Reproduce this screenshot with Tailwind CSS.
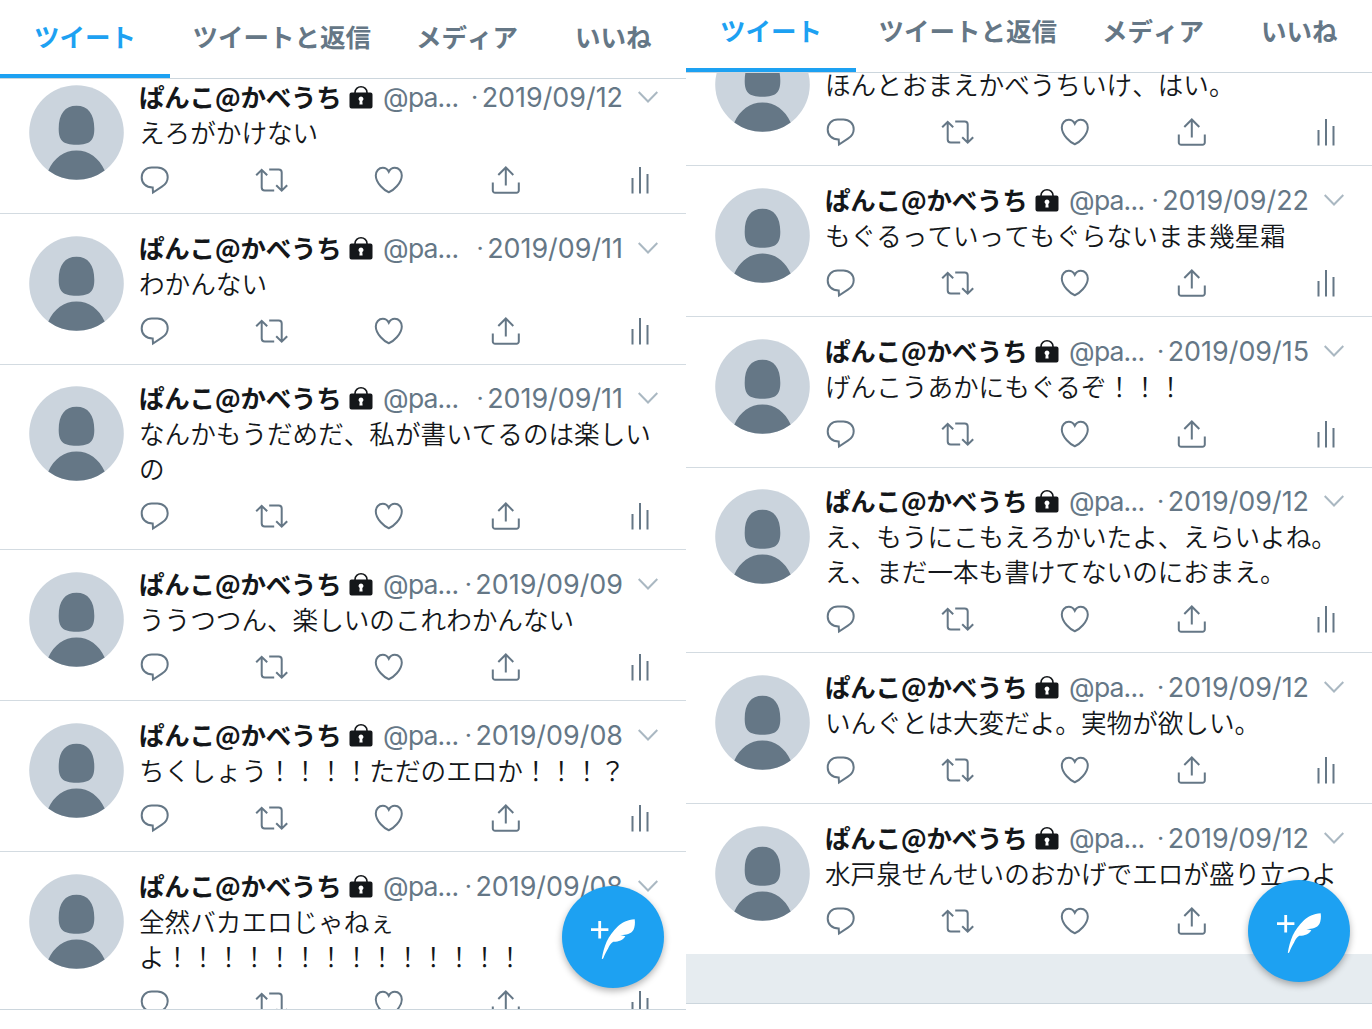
<!doctype html>
<html lang="ja">
  <head>
    <meta charset="utf-8" />
    <title>ツイート</title>
    <meta name="viewport" content="width=device-width, initial-scale=1" />
    <script src="https://cdn.jsdelivr.net/npm/@tailwindcss/browser@4"></script>
  </head>
  <body class="bg-white font-['Noto_Sans_CJK_JP',sans-serif] text-[#14171a] [font-kerning:none]">
    <!-- Icons -->
    <svg class="hidden">
      <symbol id="avatar" viewBox="0 0 95 95">
        <circle cx="47.500" cy="47.500" r="47.300" fill="#cbd4dd" />
        <path d="M47.500 20.700c11.500 0 17.800 8 17.800 23 0 11.500-3.800 16-17.800 16s-17.800-4.500-17.800-16c0-15 6.300-23 17.800-23z" fill="#657786" />
        <path d="M19.300 85.500C25 73 35 65.500 47.500 65.500S70 73 75.700 85.500a47.300 47.300 0 0 1-56.400 0z" fill="#657786" />
      </symbol>
      <symbol id="lock" viewBox="0 0 24 24">
        <path d="M6 9V7.500a6 5.800 0 0 1 12 0V9" fill="none" stroke="#14171a" stroke-width="1.600" />
        <path fill-rule="evenodd" d="M2.500 7.500h19a2 2 0 0 1 2 2v12a2 2 0 0 1-2 2h-19a2 2 0 0 1-2-2v-12a2 2 0 0 1 2-2zM12 11.500a2.500 2.500 0 0 0-1.300 4.600l-.3 3.400h3.200l-.3-3.400a2.500 2.500 0 0 0-1.300-4.600z" fill="#14171a" />
      </symbol>
      <symbol id="reply" viewBox="0 0 34 30">
        <path d="M14.700 22.500C7.700 22.500 3.700 18 3.700 12.500 3.700 6.500 8 2.500 13.700 2.500h5.700c6 0 10.300 4.200 10.300 9.700 0 4.200-2.300 7.300-5.800 9.500l-8.900 5.800z" />
      </symbol>
      <symbol id="retweet" viewBox="0 0 34 30">
        <path d="M1.200 10.300 6.700 4.800l5.500 5.500M6.700 5v17.500a3 3 0 0 0 3 3h9.500M32.200 20.200l-5.500 5.500-5.500-5.500M26.700 25V7.500a3 3 0 0 0-3-3h-9.500" />
      </symbol>
      <symbol id="like" viewBox="0 0 34 30">
        <path d="M16.800 27.300c-4-1.500-13-9-13-16.800C3.800 6 6.800 2.800 10.800 2.800c2.700 0 4.800 1.500 6 4 1.200-2.500 3.300-4 6-4 4 0 7 3.200 7 7.700 0 7.800-9 15.300-13 16.800z" />
      </symbol>
      <symbol id="share" viewBox="0 0 34 30">
        <path d="M16.800 20.500V3M9.300 10l7.500-7.500 7.500 7.500M3.800 17.500v8a2.300 2.300 0 0 0 2.300 2.300h21.400a2.300 2.300 0 0 0 2.300-2.300v-8" />
      </symbol>
      <symbol id="stats" viewBox="0 0 34 30">
        <path d="M9.500 13V28.500M17 2V28.500M24.500 9V28.500" />
      </symbol>
      <symbol id="compose" viewBox="0 0 102 102">
        <path d="M37.700 35v17.400M29 43.700h17.400" stroke="#fff" stroke-width="2.800" />
        <path d="M72.700 33.200C65.500 33.500 60 36.500 55.700 40.500 51 45 47.300 50 44.700 55.500 42.300 61 40.700 67 39.800 72.700c.4.600 1 .3 1.500-.4 1.700-4.200 3.200-7 4.900-10 1.200-2.800 2.600-5.100 5.100-6.600 4.500.2 9.800-1.300 12.100-5.500l-5-1.100c5 .1 10.700-.9 13-5 1.400-3 1.900-6.900 1.300-10.900z" fill="#fff" />
      </symbol>
    </svg>

    <template id="tweet">
      <article class="flex h-[150.8px] shrink-0 border-b border-[#d3dbe1] bg-white pl-[29px] pt-[21.800px]">
        <svg class="mr-[15px] size-[95px] shrink-0"><use href="#avatar" /></svg>
        <div class="w-[520px]">
          <header class="flex h-6 items-center whitespace-nowrap">
            <b class="-mt-[2px] w-[210px] text-[25.500px] leading-6 tracking-[-0.2px]">ぱんこ@かべうち</b>
            <svg class="mr-[10px] size-6 shrink-0"><use href="#lock" /></svg>
            <span class="font-['Inter',sans-serif] text-[26.500px] leading-6 tracking-[-0.7px] text-[#657786]">@pa...</span>
            <span class="ml-auto mr-[3.500px] font-['Inter',sans-serif] text-[25px] leading-6 text-[#657786]">·</span>
            <span class="date font-['Inter',sans-serif] text-[26.900px] leading-6 text-[#657786]"></span>
            <svg class="ml-[15px] mr-px h-3 w-5 shrink-0 fill-none stroke-[#aab8c2] stroke-2" viewBox="0 0 20 12"><path d="M.7 1 10 10.500 19.300 1" /></svg>
          </header>
          <p class="text mt-[5px] whitespace-pre text-[25.600px] font-[350] leading-[35px]"></p>
          <div class="-ml-px mt-[16px] flex fill-none stroke-[#657786] stroke-2">
            <svg class="mr-[83px] h-[30px] w-[34px]"><use href="#reply" /></svg>
            <svg class="mr-[83px] h-[30px] w-[34px]"><use href="#retweet" /></svg>
            <svg class="mr-[83px] h-[30px] w-[34px]"><use href="#like" /></svg>
            <svg class="mr-[100px] h-[30px] w-[34px]"><use href="#share" /></svg>
            <svg class="h-[30px] w-[34px]"><use href="#stats" /></svg>
          </div>
        </div>
      </article>
    </template>

    <div class="flex h-[1029px] overflow-hidden">
      <section class="relative flex w-[686px] flex-col">
        <nav class="flex h-[79px] shrink-0 border-b border-[#ccd6dd] text-[25.500px] font-bold text-[#657786]">
          <span class="h-[78px] w-[170px] border-b-4 border-[#1da1f2] pl-[34px] leading-[72px] text-[#1da1f2]">ツイート</span>
          <span class="w-[246px] pl-[22.500px] leading-[72px]">ツイートと返信</span>
          <span class="w-[159px] leading-[72px]">メディア</span>
          <span class="leading-[72px]">いいね</span>
        </nav>
        <main id="left" class="flex h-[931px] flex-col overflow-hidden border-b border-[#ccd6dd]"></main>
        <button class="absolute left-[562px] top-[886px] size-[102px] rounded-full bg-[#1da1f2] shadow-[0_3px_7px_rgba(0,0,0,0.3)]">
          <svg class="size-[102px]"><use href="#compose" /></svg>
        </button>
      </section>

      <section class="relative flex w-[686px] flex-col">
        <nav class="flex h-[73px] shrink-0 border-b border-[#ccd6dd] text-[25.500px] font-bold text-[#657786]">
          <span class="h-[72px] w-[170px] border-b-4 border-[#1da1f2] pl-[34px] leading-[60px] text-[#1da1f2]">ツイート</span>
          <span class="w-[246px] pl-[22.500px] leading-[60px]">ツイートと返信</span>
          <span class="w-[159px] leading-[60px]">メディア</span>
          <span class="leading-[60px]">いいね</span>
        </nav>
        <main id="right" class="flex h-[931px] flex-col overflow-hidden border-b border-[#ccd6dd] bg-[#e6ecf0]"></main>
        <button class="absolute left-[562px] top-[880px] size-[102px] rounded-full bg-[#1da1f2] shadow-[0_3px_7px_rgba(0,0,0,0.3)]">
          <svg class="size-[102px]"><use href="#compose" /></svg>
        </button>
      </section>
    </div>

    <script>
      const feeds = {
        left: [
          ["2019/09/12", "えろがかけない"],
          ["2019/09/11", "わかんない"],
          ["2019/09/11", "なんかもうだめだ、私が書いてるのは楽しい\nの"],
          ["2019/09/09", "ううつつん、楽しいのこれわかんない"],
          ["2019/09/08", "ちくしょう！！！！ただのエロか！！！？"],
          ["2019/09/08", "全然バカエロじゃねぇ\nよ！！！！！！！！！！！！！！"],
        ],
        right: [
          ["", "ほんとおまえかべうちいけ、はい。"],
          ["2019/09/22", "もぐるっていってもぐらないまま幾星霜"],
          ["2019/09/15", "げんこうあかにもぐるぞ！！！"],
          ["2019/09/12", "え、もうにこもえろかいたよ、えらいよね。\nえ、まだ一本も書けてないのにおまえ。"],
          ["2019/09/12", "いんぐとは大変だよ。実物が欲しい。"],
          ["2019/09/12", "水戸泉せんせいのおかげでエロが盛り立つよ"],
        ],
      };
      const template = document.querySelector("#tweet");

      Object.entries(feeds).forEach(([id, tweets]) => {
        const feed = document.querySelector(`#${id}`);
        tweets.forEach(([date, text], i) => {
          const tweet = template.content.cloneNode(true).firstElementChild;
          tweet.querySelector(".date").textContent = date;
          tweet.querySelector(".text").textContent = text;
          if (text.includes("\n")) {
            tweet.classList.replace("h-[150.8px]", "h-[185.8px]");
          }
          // The feeds are scrolled a little under the tab bar
          if (i === 0) {
            tweet.classList.add(id === "left" ? "-mt-[16px]" : "-mt-[57.900px]");
          }
          // Scrolled out of view, only the space is needed
          if (!date) {
            tweet.querySelector("header").replaceChildren();
          }
          feed.appendChild(tweet);
        });
        const last = feed.lastElementChild;
        last.classList.replace("border-b", "border-b-0");
        last.classList.replace("h-[150.8px]", "h-[149.8px]");
      });
    </script>
  </body>
</html>
